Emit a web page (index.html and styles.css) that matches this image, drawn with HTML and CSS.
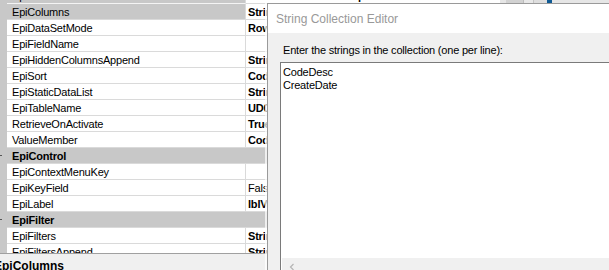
FILE: index.html
```html
<!DOCTYPE html>
<html lang="en">
<head>
  <meta charset="UTF-8">
  <title>String Collection Editor</title>
  <link rel="stylesheet" href="styles.css">
</head>
<body>
  <div class="screen">
    <!-- property grid -->
    <div class="props">
      <div class="grid">
        <div class="rows">
          <div class="row sel"><span class="mark"></span><span class="name">EpiCodeName</span><span class="val b">UDCodes.CodeDescription</span></div>
          <div class="row sel"><span class="mark"></span><span class="name">EpiColumns</span><span class="val b">String[] Array</span></div>
          <div class="row"><span class="mark"></span><span class="name">EpiDataSetMode</span><span class="val b">RowsetDataSet</span></div>
          <div class="row"><span class="mark"></span><span class="name">EpiFieldName</span><span class="val"></span></div>
          <div class="row"><span class="mark"></span><span class="name">EpiHiddenColumnsAppend</span><span class="val b">String[] Array</span></div>
          <div class="row"><span class="mark"></span><span class="name">EpiSort</span><span class="val b">CodeDesc</span></div>
          <div class="row"><span class="mark"></span><span class="name">EpiStaticDataList</span><span class="val b">String[] Array</span></div>
          <div class="row"><span class="mark"></span><span class="name">EpiTableName</span><span class="val b">UD03</span></div>
          <div class="row"><span class="mark"></span><span class="name">RetrieveOnActivate</span><span class="val b">True</span></div>
          <div class="row"><span class="mark"></span><span class="name">ValueMember</span><span class="val b">CodeID</span></div>
          <div class="cat"><span class="mark"><i class="tick"></i></span><span class="cat-name">EpiControl</span></div>
          <div class="row"><span class="mark"></span><span class="name">EpiContextMenuKey</span><span class="val"></span></div>
          <div class="row"><span class="mark"></span><span class="name">EpiKeyField</span><span class="val">False</span></div>
          <div class="row"><span class="mark"></span><span class="name">EpiLabel</span><span class="val b">lblValue</span></div>
          <div class="cat"><span class="mark"><i class="tick"></i></span><span class="cat-name">EpiFilter</span></div>
          <div class="row"><span class="mark"></span><span class="name">EpiFilters</span><span class="val b">String[] Array</span></div>
          <div class="row"><span class="mark"></span><span class="name">EpiFiltersAppend</span><span class="val b">String[] Array</span></div>
        </div>
      </div>
      <div class="desc"><b>EpiColumns</b></div>
    </div>

    <!-- window behind, only its top edge shows -->
    <div class="side">
      <div class="strip">
        <span class="seg dark"></span>
        <span class="seg mid"></span>
        <span class="seg light"></span>
        <span class="seg blue"></span>
      </div>
    </div>

    <!-- dialog -->
    <div class="dialog">
      <div class="title">String Collection Editor</div>
      <div class="dlg-body">
        <div class="prompt">Enter the strings in the collection (one per line):</div>
        <div class="textbox">
          <div class="lines">CodeDesc<br>CreateDate</div>
          <div class="hscroll">
            <svg width="8" height="8" viewBox="0 0 8 8"><path d="M5.5 1 L2.5 4 L5.5 7" fill="none" stroke="#b4b4b4" stroke-width="1.2"/></svg>
          </div>
        </div>
      </div>
    </div>
  </div>
</body>
</html>
```

FILE: styles.css
```css
body {
  margin: 0;
  background: #fff;
  font-family: 'Liberation Sans', Arial, sans-serif;
  font-size: 11px;
  color: #000;
}

.screen {
  width: 609px;
  height: 270px;
  overflow: hidden;
  display: flex;
  position: relative;
}

/* property grid */
.props {
  width: 500px;
  height: 270px;
  display: flex;
  flex-direction: column;
  flex: none;
}

.grid {
  flex: 1;
  overflow: hidden;
  border-bottom: 1px solid #a0a0a0;
}

.rows {
  margin-top: -13px;
  letter-spacing: -0.2px;
}

.row,
.cat {
  display: flex;
  height: 16px;
}

.mark {
  width: 7px;
  flex: none;
  background: #c8c8c8;
  position: relative;
}

.name {
  width: 239px;
  flex: none;
  box-sizing: border-box;
  border-top: 1px solid #dadada;
  border-right: 1px solid #dadada;
  padding: 1px 0 0 5px;
  line-height: 14px;
  white-space: nowrap;
  overflow: hidden;
}

.val {
  flex: 1;
  border-top: 1px solid #dadada;
  padding: 1px 0 0 2px;
  line-height: 14px;
  white-space: nowrap;
  overflow: hidden;
}

.val.b {
  font-weight: bold;
}

.row.sel .name {
  background: #c8c8c8;
  border-top-color: #f4f4f4;
}

.cat {
  background: #c8c8c8;
}

.cat-name {
  flex: 1;
  padding: 1px 0 0 5px;
  border-top: 1px solid #dadada;
  line-height: 14px;
  font-weight: bold;
}

/* collapse glyph, cut off by the left edge */
.tick {
  position: absolute;
  left: 0;
  top: 8px;
  width: 2px;
  height: 1px;
  background: #555;
}

.desc {
  height: 16px;
  background: #f0f0f0;
  overflow: hidden;
}

.desc b {
  display: block;
  margin: 5px 0 0 -6px;
  font-size: 12px;
  line-height: 14px;
}

/* window behind the dialog */
.side {
  flex: 1;
  background: #f0f0f0;
}

.strip {
  height: 3px;
  display: flex;
  background: #e6e6e6;
  padding-left: 6px;
}

.seg {
  height: 3px;
}

.seg.dark {
  width: 17px;
  background: #d2d2d2;
  border-right: 1px solid #bdbdbd;
}

.seg.mid {
  width: 9px;
  background: #e8e8e8;
  border-right: 1px solid #c4c4c4;
}

.seg.light {
  width: 13px;
  background: #dedede;
}

.seg.blue {
  width: 5px;
  background: #0f5a94;
}

/* String Collection Editor */
.dialog {
  position: absolute;
  left: 267px;
  top: 3px;
  width: 380px;
  height: 300px;
  border: 1px solid #9a9a9a;
  background: #f0f0f0;
  box-shadow: -2px 0 0 rgba(255, 255, 255, 0.7);
}

.title {
  height: 29px;
  background: #fff;
  color: #999;
  font-size: 12px;
  padding-left: 8px;
  display: flex;
  align-items: center;
}

.dlg-body {
  padding: 11px 0 0 12px;
  letter-spacing: -0.2px;
}

.prompt {
  padding-left: 3px;
  line-height: 13px;
}

.textbox {
  margin-top: 5px;
  height: 230px;
  border: 1px solid #7a7a7a;
  border-right: none;
  background: #fff;
  display: flex;
  flex-direction: column;
}

.lines {
  height: 189px;
  padding: 3px 2px;
  line-height: 13px;
}

.hscroll {
  height: 17px;
  margin-left: 1px;
  background: #f0f0f0;
  display: flex;
  align-items: center;
  padding-left: 6px;
}
```
